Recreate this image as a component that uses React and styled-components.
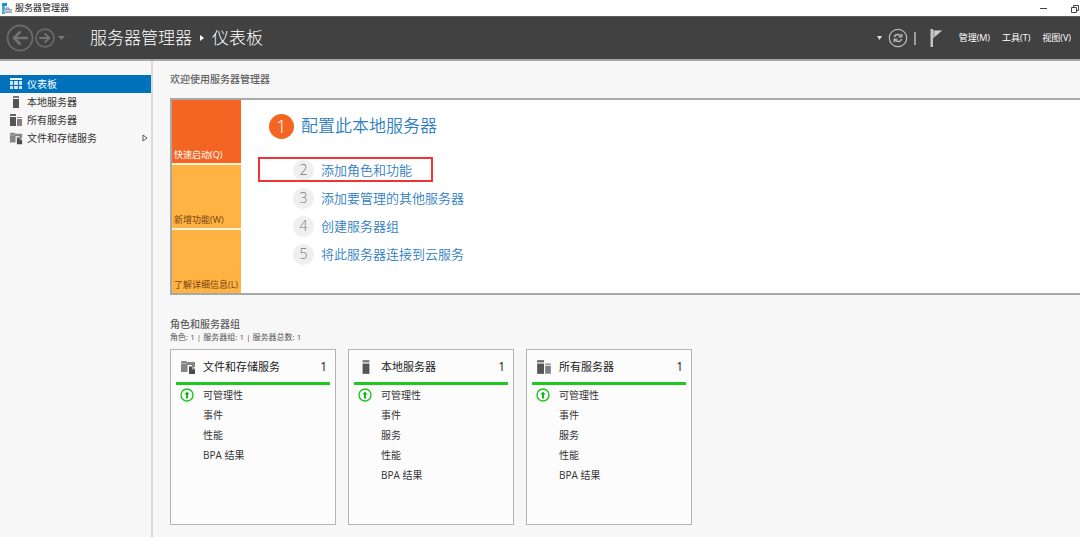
import React from 'react';
import styled, { createGlobalStyle, css } from 'styled-components';

const GlobalStyle = createGlobalStyle`
  * { box-sizing: border-box; }
  body {
    margin: 0;
    background: #f7f7f7;
    color: #333;
    font-family: "Open Sans", "Noto Sans CJK SC", sans-serif;
    font-size: 10px;
    line-height: 18px;
    overflow-x: hidden;
  }
  button {
    margin: 0;
    padding: 0;
    border: 0;
    background: none;
    color: inherit;
    font: inherit;
    white-space: nowrap;
    cursor: pointer;
  }
  a { color: inherit; text-decoration: none; }
  ul, ol { margin: 0; padding: 0; list-style: none; }
  h1, h2, h3, p { margin: 0; }
  svg { display: block; flex: none; }
`;

const Page = styled.div`
  display: flex;
  flex-direction: column;
  min-height: 100vh;
  overflow: hidden;
`;

const TitleBar = styled.div`
  display: flex;
  align-items: center;
  height: 16px;
  padding: 0 1px;
  gap: 3px;
  background: #fff;
  color: #111;
  font-size: 9px;
  line-height: 16px;
`;

const WindowControls = styled.div`
  display: flex;
  gap: 22px;
  margin-left: auto;
`;

const Header = styled.header`
  display: flex;
  align-items: center;
  height: 45px;
  padding: 0 9px 0 6px;
  background: #414141;
  border-top: 1px solid #5c5c5c;
  border-bottom: 2px solid #a6a6a6;
  color: #fff;
`;

const HistoryNav = styled.div`
  display: flex;
  align-items: center;
  gap: 1px;
  width: 84px;
`;

const HistoryButton = styled.button`
  margin-left: 2px;
`;

const Crumbs = styled.h1`
  display: flex;
  align-items: center;
  gap: 8px;
  font-size: 17px;
  line-height: 24px;
  font-weight: 300;
  white-space: nowrap;
`;

const Tools = styled.div`
  display: flex;
  align-items: center;
  gap: 6px;
  margin-left: auto;
`;

const Divider = styled.span`
  width: 2px;
  height: 13px;
  margin-right: 8px;
  background: #9c9c9c;
`;

const Menus = styled.nav`
  display: flex;
  gap: 12px;
  margin-left: 10px;
  font-size: 9px;
`;

const Body = styled.div`
  display: flex;
  flex: 1;
`;

const Sidebar = styled.nav`
  flex: none;
  width: 153px;
  padding-top: 14px;
  border-right: 2px solid #dadada;
`;

const SideLink = styled.a`
  display: flex;
  align-items: center;
  gap: 4px;
  height: 18px;
  padding: 0 3px 0 9px;
  color: #333;
  ${(p) => p.$active && css`
    background: #0072bc;
    color: #fff;
  `}
`;

const Expander = styled.span`
  margin-left: auto;
`;

const Main = styled.main`
  flex: 1;
  min-width: 0;
  padding: 11px 0 12px 17px;
`;

const SectionTitle = styled.h2`
  font-size: 10px;
  line-height: 14px;
  font-weight: 500;
  color: #606060;
`;

const Welcome = styled.section`
  display: flex;
  width: calc(100% + 40px);
  margin: 12px 0 22px;
  background: #fff;
  border: 2px solid #a8a8a8;
`;

const Tiles = styled.div`
  display: grid;
  gap: 2px;
  width: 69px;
  background: #fff3dc;
`;

const Tile = styled.button`
  display: flex;
  align-items: flex-end;
  height: 63px;
  padding: 0 2px;
  background: ${(p) => (p.$primary ? '#f46523' : '#ffb343')};
  color: ${(p) => (p.$primary ? '#fff' : '#7a4210')};
  font-size: 9px;
  line-height: 16px;
`;

const Steps = styled.ol`
  padding: 12px 0 0 28px;
  color: #2f80c2;
`;

const Step = styled.li`
  display: flex;
  align-items: center;
  position: relative;
  height: 28px;
  padding-left: 24px;
  font-size: 13px;
  line-height: 20px;
  font-weight: 350;
  ${(p) => p.$primary && css`
    margin-bottom: 16px;
    padding-left: 0;
    font-size: 17px;
    line-height: 24px;
  `}
`;

const StepLink = styled.a`
  display: flex;
  align-items: center;
  gap: 7px;
`;

const StepNumber = styled.span`
  display: grid;
  place-items: center;
  width: ${(p) => (p.$primary ? 25 : 21)}px;
  height: ${(p) => (p.$primary ? 25 : 21)}px;
  border-radius: 50%;
  background: ${(p) => (p.$primary ? '#f46523' : '#efefef')};
  color: ${(p) => (p.$primary ? '#fff' : '#777')};
  font-size: ${(p) => (p.$primary ? 18 : 14)}px;
  font-weight: 300;
`;

const Highlight = styled.span`
  position: absolute;
  inset: 1px auto auto -11px;
  width: 175px;
  height: 25px;
  border: 2px solid #ee3434;
  pointer-events: none;
`;

const HideButton = styled.button`
  align-self: flex-end;
  margin: 0 8px 11px auto;
  color: #444;
`;

const Summary = styled.p`
  font-size: 8px;
  line-height: 12px;
  color: #555;
`;

const Cards = styled.div`
  display: flex;
  flex-wrap: wrap;
  gap: 12px;
  margin-top: 6px;
`;

const Card = styled.article`
  width: 166px;
  min-height: 176px;
  padding: 5px;
  background: #fcfcfc;
  border: 1px solid #b4b4b4;
`;

const CardHead = styled.div`
  display: flex;
  align-items: center;
  gap: 7px;
  height: 30px;
  padding: 0 3px 3px 4px;
  border-bottom: 3px solid #1fc91f;
`;

const CardTitle = styled.h3`
  font-size: 11px;
  line-height: 18px;
  font-weight: 400;
  color: #222;
`;

const Count = styled.span`
  margin-left: auto;
  font-size: 12px;
  color: #222;
`;

const CardRow = styled.li`
  display: flex;
  align-items: center;
  gap: 9px;
  height: 20px;
  padding-left: ${(p) => (p.$status ? 4 : 27)}px;
`;

const AppIcon = () => (
  <svg width="11" height="11" viewBox="0 0 11 11">
    <path d="M1 0h5v3H3v7H1z" fill="#1b8fd0" />
    <path d="M1 3h3v8H1z" fill="#45aee3" />
    <path d="M5 6V5h3v1" fill="none" stroke="#6d8595" />
    <path d="M3 6h8v4H3z" fill="#8da4b4" />
    <path d="M3 8h8" stroke="#dfe8ee" />
  </svg>
);

const DashboardIcon = () => (
  <svg width="14" height="14" viewBox="0 0 14 14">
    <path d="M1 1h12v2H1z" fill="#e4f1fa" />
    <path d="M1 4h3v4H1zM5 4h4v4H5zM10 4h3v4h-3zM1 9h3v3H1zM5 9h4v3H5zM10 9h3v3h-3z" fill="#cfe5f5" />
  </svg>
);

const ServerIcon = ({ size = 14 }) => (
  <svg width={size} height={size} viewBox="0 0 14 14">
    <path d="M4 1h6v2H4z" fill="#777" />
    <path d="M4 4h6v9H4z" fill="#555" />
  </svg>
);

const ServersIcon = ({ size = 14 }) => (
  <svg width={size} height={size} viewBox="0 0 14 14">
    <path d="M1 1h6v2H1z" fill="#666" />
    <path d="M1 4h6v9H1z" fill="#555" />
    <path d="M8 4h5v1H8zM8 6h5v7H8z" fill="#808080" />
  </svg>
);

const StorageIcon = ({ size = 14 }) => (
  <svg width={size} height={size} viewBox="-1 -1 16 16">
    <path d="M0 2l1-1h4l1 1h8v5h-3V5H6.500v7H0z" fill="#858585" />
    <path d="M0 3.500h5.500" stroke="#c8c8c8" strokeWidth=".8" />
    <path d="M8 6.500h3.500L14 9v5H8z" fill="#4c4c4c" />
    <path d="M11.500 6.500V9H14" fill="none" stroke="#ddd" strokeWidth=".7" />
  </svg>
);

const UpIcon = () => (
  <svg width="14" height="14" viewBox="0 0 14 14">
    <circle cx="7" cy="7" r="6" fill="#fff" stroke="#1cc61c" strokeWidth="1.400" />
    <path d="M7 3.500L9.700 6.400H8v4H6v-4H4.300z" fill="#15b915" />
  </svg>
);

const ArrowCircle = ({ size, flip, label }) => (
  <button aria-label={label} disabled>
    <svg width={size} height={size} viewBox="0 0 28 28">
      <circle cx="14" cy="14" r="12.500" fill="none" stroke="#6a6a6a" strokeWidth={flip ? 2.4 : 1.8} />
      <path
        d="M22 14H8M14.500 7.500L8 14L14.500 20.500"
        fill="none"
        stroke="#747474"
        strokeWidth="2.600"
        transform={flip ? 'rotate(180 14 14)' : undefined}
      />
    </svg>
  </button>
);

const Caret = ({ width, fill }) => (
  <svg width={width} height="4" viewBox="0 0 8 4" preserveAspectRatio="none">
    <path d="M0 0h8L4 4z" fill={fill} />
  </svg>
);

const RefreshIcon = () => (
  <svg width="20" height="20" viewBox="0 0 20 20" fill="none" stroke="#b8b8b8">
    <circle cx="10" cy="10" r="8.700" strokeWidth="1.200" />
    <path d="M6.500 9q.4-2.500 3.500-2.500 1.800 0 3 1.700M13.500 11q-.4 2.500-3.500 2.500-1.800 0-3-1.700" strokeWidth="1.500" />
    <path d="M13.800 5.800v3h-3.300M6.200 14.200v-3h3.300" strokeWidth="1.300" />
  </svg>
);

const FlagIcon = () => (
  <svg width="13" height="18" viewBox="0 0 13 18">
    <path d="M3 1.300h9.500L3 9.500z" fill="#a8a8a8" />
    <path d="M5 2h6L5 7.200z" fill="#d0d0d0" />
    <path d="M.500 0h2.500v18H.500z" fill="#c4c4c4" />
  </svg>
);

const navigation = [
  { label: '仪表板', Icon: DashboardIcon, active: true },
  { label: '本地服务器', Icon: ServerIcon },
  { label: '所有服务器', Icon: ServersIcon },
  { label: '文件和存储服务', Icon: StorageIcon, expandable: true },
];

const steps = [
  { label: '配置此本地服务器', primary: true },
  { label: '添加角色和功能', highlighted: true },
  { label: '添加要管理的其他服务器' },
  { label: '创建服务器组' },
  { label: '将此服务器连接到云服务' },
];

const groups = [
  { title: '文件和存储服务', Icon: StorageIcon, rows: ['可管理性', '事件', '性能', 'BPA 结果'] },
  { title: '本地服务器', Icon: ServerIcon, rows: ['可管理性', '事件', '服务', '性能', 'BPA 结果'] },
  { title: '所有服务器', Icon: ServersIcon, rows: ['可管理性', '事件', '服务', '性能', 'BPA 结果'] },
];

export default function App() {
  return (
    <Page>
      <GlobalStyle />
      <TitleBar>
        <AppIcon />
        <span>服务器管理器</span>
        <WindowControls>
          <button aria-label="最小化">
            <svg width="9" height="9" viewBox="0 0 9 9"><path d="M1 4.500h7" stroke="#444" /></svg>
          </button>
          <button aria-label="还原">
            <svg width="9" height="9" viewBox="0 0 9 9" fill="none" stroke="#444">
              <path d="M1.500 3.500h5v5h-5zM3.500 3V1.500h5v5H7" />
            </svg>
          </button>
        </WindowControls>
      </TitleBar>

      <Header>
        <HistoryNav>
          <ArrowCircle size={28} label="后退" />
          <ArrowCircle size={20} flip label="前进" />
          <HistoryButton aria-label="历史记录"><Caret width={7} fill="#777" /></HistoryButton>
        </HistoryNav>
        <Crumbs>
          <span>服务器管理器</span>
          <svg width="4" height="8" viewBox="0 0 4 8"><path d="M0 1l4 3-4 3z" fill="#fff" /></svg>
          <span>仪表板</span>
        </Crumbs>
        <Tools>
          <button aria-label="更多"><Caret width={5} fill="#ddd" /></button>
          <button aria-label="刷新"><RefreshIcon /></button>
          <Divider />
          <button aria-label="通知"><FlagIcon /></button>
          <Menus>
            <button>管理(M)</button>
            <button>工具(T)</button>
            <button>视图(V)</button>
          </Menus>
        </Tools>
      </Header>

      <Body>
        <Sidebar>
          {navigation.map(({ label, Icon, active, expandable }) => (
            <SideLink href="#" key={label} $active={active}>
              <Icon />
              <span>{label}</span>
              {expandable && (
                <Expander>
                  <svg width="6" height="8" viewBox="0 0 6 8">
                    <path d="M1 1l4 3-4 3z" fill="#fff" stroke="#444" strokeWidth=".9" />
                  </svg>
                </Expander>
              )}
            </SideLink>
          ))}
        </Sidebar>

        <Main>
          <SectionTitle>欢迎使用服务器管理器</SectionTitle>
          <Welcome>
            <Tiles>
              <Tile $primary>快速启动(Q)</Tile>
              <Tile>新增功能(W)</Tile>
              <Tile>了解详细信息(L)</Tile>
            </Tiles>
            <Steps>
              {steps.map(({ label, primary, highlighted }, index) => (
                <Step key={label} $primary={primary}>
                  {highlighted && <Highlight />}
                  <StepLink href="#">
                    <StepNumber $primary={primary}>{index + 1}</StepNumber>
                    <span>{label}</span>
                  </StepLink>
                </Step>
              ))}
            </Steps>
            <HideButton>隐藏</HideButton>
          </Welcome>

          <SectionTitle>角色和服务器组</SectionTitle>
          <Summary>角色: 1 | 服务器组: 1 | 服务器总数: 1</Summary>
          <Cards>
            {groups.map(({ title, Icon, rows }) => (
              <Card key={title}>
                <CardHead>
                  <Icon size={16} />
                  <CardTitle>{title}</CardTitle>
                  <Count>1</Count>
                </CardHead>
                <ul>
                  {rows.map((row, index) => (
                    <CardRow key={row} $status={index === 0}>
                      {index === 0 && <UpIcon />}
                      <a href="#">{row}</a>
                    </CardRow>
                  ))}
                </ul>
              </Card>
            ))}
          </Cards>
        </Main>
      </Body>
    </Page>
  );
}
